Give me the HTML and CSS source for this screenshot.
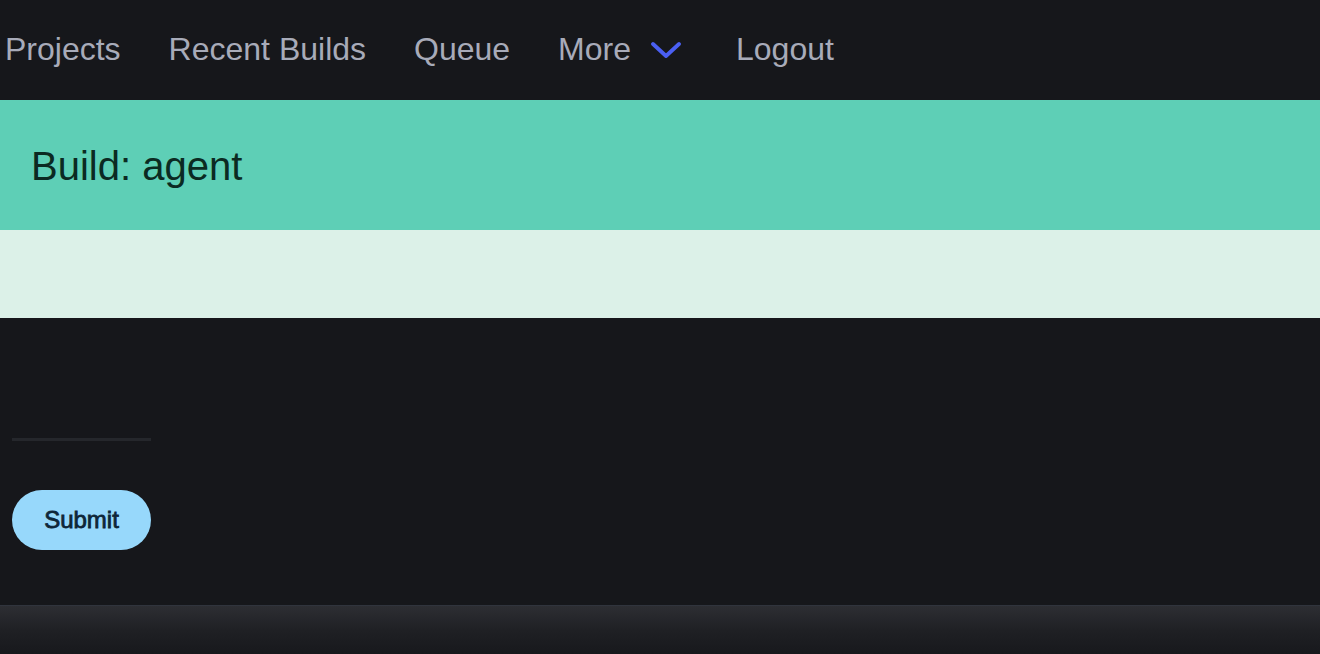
FILE: index.html
```html
<!DOCTYPE html>
<html>
<head>
<meta charset="utf-8">
<link rel="stylesheet" href="styles.css">
</head>
<body>
<nav class="nav">
  <a class="nav-item">Projects</a>
  <a class="nav-item">Recent Builds</a>
  <a class="nav-item">Queue</a>
  <a class="nav-item more">More
    <svg class="chev" width="30" height="18" viewBox="0 0 30 18"><path d="M2 3 L15 15 L28 3" fill="none" stroke="#4a5ff2" stroke-width="3.8" stroke-linecap="round" stroke-linejoin="round"/></svg>
  </a>
  <a class="nav-item">Logout</a>
</nav>
<header class="title-bar"><h1 class="title">Build: agent</h1></header>
<div class="band"></div>
<main class="content">
  <div class="divider"></div>
  <button class="submit">Submit</button>
</main>
<footer class="footer"></footer>
</body>
</html>
```

FILE: styles.css
```css
html, body {
  margin: 0;
  padding: 0;
  background: #16171b;
  font-family: "Liberation Sans", Arial, sans-serif;
  height: 654px;
  overflow: hidden;
}
.nav {
  height: 100px;
  display: flex;
  align-items: center;
  gap: 48px;
  padding-left: 5px;
  box-sizing: border-box;
}
.nav-item {
  color: #a8abb9;
  font-size: 32px;
  line-height: 1;
  display: flex;
  align-items: center;
  gap: 20px;
  position: relative;
  top: -1px;
}
.more { margin-right: 7px; }
.chev { display: block; margin-top: 2px; }
.title-bar {
  height: 130px;
  background: #5ecfb6;
  display: flex;
  align-items: center;
  padding-left: 31px;
  box-sizing: border-box;
}
.title {
  margin: 0;
  font-weight: normal;
  font-size: 40px;
  color: #0b2a22;
  line-height: 1;
  position: relative;
  top: 1px;
}
.band {
  height: 88px;
  background: #dcf1e8;
}
.content {
  height: 287px;
  padding: 120px 0 0 12px;
  box-sizing: border-box;
  display: flex;
  flex-direction: column;
  align-items: flex-start;
}
.divider {
  width: 139px;
  height: 3px;
  background: #25272c;
}
.submit {
  margin-top: 49px;
  width: 139px;
  height: 60px;
  border: none;
  border-radius: 30px;
  background: #97d8fb;
  color: #0e2638;
  font-family: "Liberation Sans", Arial, sans-serif;
  font-size: 24px;
  font-weight: normal;
  -webkit-text-stroke: 0.8px #0e2638;
  padding: 0;
}
.footer {
  height: 49px;
  border-top: 1px solid #30343d;
  background: linear-gradient(#2d2e33, #1f2024 50%, #17181c);
}
```
